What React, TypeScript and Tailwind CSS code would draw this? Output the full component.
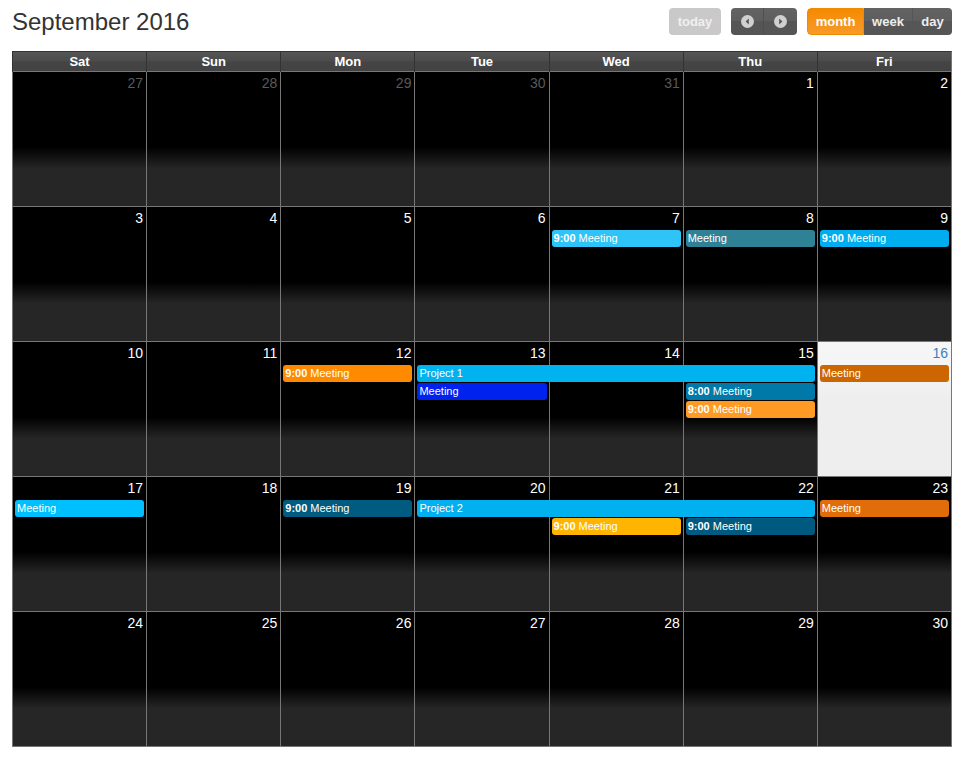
import React from "react";

type Ev = {
  col: number;
  span?: number;
  row: number;
  time?: string;
  title: string;
  color: string;
};

type Week = {
  days: { n: number; other?: boolean; today?: boolean }[];
  events: Ev[];
};

const colStart: Record<number, string> = {
  1: "col-start-1",
  2: "col-start-2",
  3: "col-start-3",
  4: "col-start-4",
  5: "col-start-5",
  6: "col-start-6",
  7: "col-start-7",
};

const colSpan: Record<number, string> = {
  1: "col-span-1",
  2: "col-span-2",
  3: "col-span-3",
};

const rowStart: Record<number, string> = {
  1: "row-start-2",
  2: "row-start-3",
  3: "row-start-4",
};

const weeks: Week[] = [
  {
    days: [
      { n: 27, other: true },
      { n: 28, other: true },
      { n: 29, other: true },
      { n: 30, other: true },
      { n: 31, other: true },
      { n: 1 },
      { n: 2 },
    ],
    events: [],
  },
  {
    days: [{ n: 3 }, { n: 4 }, { n: 5 }, { n: 6 }, { n: 7 }, { n: 8 }, { n: 9 }],
    events: [
      { col: 5, row: 1, time: "9:00", title: "Meeting", color: "bg-[#2ec4f7]" },
      { col: 6, row: 1, title: "Meeting", color: "bg-[#2f8296]" },
      { col: 7, row: 1, time: "9:00", title: "Meeting", color: "bg-[#00aeef]" },
    ],
  },
  {
    days: [
      { n: 10 },
      { n: 11 },
      { n: 12 },
      { n: 13 },
      { n: 14 },
      { n: 15 },
      { n: 16, today: true },
    ],
    events: [
      { col: 3, row: 1, time: "9:00", title: "Meeting", color: "bg-[#ff8a00]" },
      { col: 4, span: 3, row: 1, title: "Project 1", color: "bg-[#00b2ee]" },
      { col: 4, row: 2, title: "Meeting", color: "bg-[#0022ee]" },
      { col: 6, row: 2, time: "8:00", title: "Meeting", color: "bg-[#0079a9]" },
      { col: 6, row: 3, time: "9:00", title: "Meeting", color: "bg-[#ff9a24]" },
      { col: 7, row: 1, title: "Meeting", color: "bg-[#cc6600]" },
    ],
  },
  {
    days: [
      { n: 17 },
      { n: 18 },
      { n: 19 },
      { n: 20 },
      { n: 21 },
      { n: 22 },
      { n: 23 },
    ],
    events: [
      { col: 1, row: 1, title: "Meeting", color: "bg-[#00bfff]" },
      { col: 3, row: 1, time: "9:00", title: "Meeting", color: "bg-[#005b80]" },
      { col: 4, span: 3, row: 1, title: "Project 2", color: "bg-[#00b0ef]" },
      { col: 5, row: 2, time: "9:00", title: "Meeting", color: "bg-[#ffb400]" },
      { col: 6, row: 2, time: "9:00", title: "Meeting", color: "bg-[#005a80]" },
      { col: 7, row: 1, title: "Meeting", color: "bg-[#e06c0a]" },
    ],
  },
  {
    days: [
      { n: 24 },
      { n: 25 },
      { n: 26 },
      { n: 27 },
      { n: 28 },
      { n: 29 },
      { n: 30 },
    ],
    events: [],
  },
];

const dayNames = ["Sat", "Sun", "Mon", "Tue", "Wed", "Thu", "Fri"];

function Arrow({ dir }: { dir: "left" | "right" }) {
  return (
    <svg width="13" height="13" viewBox="0 0 13 13">
      <circle cx="6.5" cy="6.5" r="6.5" fill="#d0d0d0" />
      {dir === "left" ? (
        <path d="M7.8 3.6 L4.6 6.5 L7.8 9.4 Z" fill="#555" />
      ) : (
        <path d="M5.2 3.6 L8.4 6.5 L5.2 9.4 Z" fill="#555" />
      )}
    </svg>
  );
}

function Toolbar() {
  return (
    <div className="flex h-[27px] items-center justify-between">
      <h2 className="text-[24px] leading-none text-[#333]">September 2016</h2>
      <div className="flex items-center gap-[10px] text-[13px] font-bold">
        <div className="flex h-[27px] w-[52px] items-center justify-center rounded-[4px] bg-[#c9c9c9] text-[#f0f0f0]">
          today
        </div>
        <div className="flex h-[27px] overflow-hidden rounded-[4px] bg-[linear-gradient(to_bottom,#636363_0%,#5e5e5e_50%,#555_50%,#555_100%)]">
          <div className="flex w-[33px] items-center justify-center border-r border-[#4e4e4e]">
            <Arrow dir="left" />
          </div>
          <div className="flex w-[33px] items-center justify-center">
            <Arrow dir="right" />
          </div>
        </div>
        <div className="flex h-[27px] overflow-hidden rounded-[4px] text-[#eee]">
          <div className="flex w-[57px] items-center justify-center rounded-l-[4px] border border-[#f08a00] bg-[linear-gradient(to_bottom,#f68a00,#f79a2a)] text-white">
            month
          </div>
          <div className="flex w-[49px] items-center justify-center border-r border-[#555] bg-[linear-gradient(to_bottom,#636363_0%,#5e5e5e_50%,#565656_50%,#565656_100%)]">
            week
          </div>
          <div className="flex w-[39px] items-center justify-center bg-[linear-gradient(to_bottom,#636363_0%,#5e5e5e_50%,#565656_50%,#565656_100%)]">
            day
          </div>
        </div>
      </div>
    </div>
  );
}

function WeekRow({ week }: { week: Week }) {
  return (
    <div className="grid h-[135px] grid-cols-7 grid-rows-[23px_18px_18px_1fr] border-t border-[#777]">
      {week.days.map((d, i) => (
        <div
          key={i}
          className={`${colStart[i + 1]} row-start-1 row-span-4 flex justify-end border-l border-[#777] px-[3px] pt-[3px] text-[14px] leading-[17px] ${
            d.today
              ? "bg-[linear-gradient(to_bottom,#f6f6f6_0%,#f4f4f4_22%,#eeeeee_42%,#eeeeee_100%)] text-[#3d80b8]"
              : "bg-[linear-gradient(to_bottom,#000_0%,#000_56%,#262626_72%,#262626_100%)]"
          } ${d.other ? "text-[#5a5a5a]" : d.today ? "" : "text-white"}`}
        >
          {d.n}
        </div>
      ))}
      {week.events.map((e, i) => (
        <div
          key={"e" + i}
          className={`${colStart[e.col]} ${colSpan[e.span ?? 1]} ${rowStart[e.row]} ${e.color} ml-[3px] mr-[2px] flex h-[17px] items-center overflow-hidden whitespace-nowrap rounded-[3px] px-[2px] text-[11px] text-white`}
        >
          {e.time && <span className="mr-[3px] font-bold">{e.time}</span>}
          <span>{e.title}</span>
        </div>
      ))}
    </div>
  );
}

export default function App() {
  return (
    <div className="min-h-screen bg-white px-[12px] pt-[8px] [font-family:'Liberation_Sans',Arial,sans-serif]">
      <Toolbar />
      <div className="mt-[16px] w-[940px] border-y border-r border-[#777] border-t-[#333]">
        <div className="grid h-[19px] grid-cols-7 bg-[linear-gradient(to_bottom,#555_0%,#4c4c4c_45%,#444_55%,#434343_100%)]">
          {dayNames.map((n) => (
            <div
              key={n}
              className="flex items-center justify-center border-l border-[#333] text-[13px] font-bold text-white"
            >
              {n}
            </div>
          ))}
        </div>
        {weeks.map((w, i) => (
          <WeekRow key={i} week={w} />
        ))}
      </div>
    </div>
  );
}
